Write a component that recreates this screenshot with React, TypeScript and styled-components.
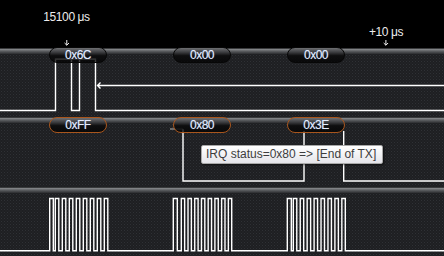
import styled, { createGlobalStyle } from "styled-components";

const GlobalStyle = createGlobalStyle`
  html, body {
    margin: 0;
    padding: 0;
    background: #000;
  }
  body {
    font-family: "Liberation Sans", Arial, sans-serif;
  }
`;

interface Frame {
  x: number;
  label: string;
}

const spiFrames: Frame[][] = [
  [
    { x: 49, label: "0x6C" },
    { x: 173, label: "0x00" },
    { x: 287, label: "0x00" },
  ],
  [
    { x: 49, label: "0xFF" },
    { x: 173, label: "0x80" },
    { x: 287, label: "0x3E" },
  ],
];

// first short pulse, then 8 clocks
const clockGroups = [
  { start: 49.7, firstEnd: 53.3, clk: 55.3, end: 107.8 },
  { start: 173.3, firstEnd: 177.3, clk: 181.3, end: 231.7 },
  { start: 287.3, firstEnd: 291.3, clk: 293.3, end: 345.3 },
];

function clockPath(high: number, low: number) {
  let d = `M0 ${low}`;
  clockGroups.forEach((g) => {
    d += ` H${g.start} V${high} H${g.firstEnd} V${low}`;
    const p = (g.end - g.clk) / 7.5;
    for (let i = 0; i < 8; i++) {
      const r = g.clk + i * p;
      d += ` H${r.toFixed(2)} V${high} H${(r + p / 2).toFixed(2)} V${low}`;
    }
  });
  return d + " H444";
}

export default function App() {
  return (
    <>
      <GlobalStyle />
      <Screen>
        <Ruler>
          <Marker $x={66.5} $gap={16}>
            <MarkerLabel>15100 μs</MarkerLabel>
            <DownArrow />
          </Marker>
          <Marker $x={386} $gap={1}>
            <MarkerLabel>+10 μs</MarkerLabel>
            <DownArrow />
          </Marker>
        </Ruler>

        <Channel $h={69}>
          <Rail />
          <Body>
            <Wave viewBox="0 0 444 63">
              <path d="M0 56.5 H55.5 V5 H71.5 V56.5 H79.5 V5 H95.5 V56.5 H444" />
              <path d="M55.5 5 H95.5" />
              <path d="M97.5 31.5 H444 M100.5 28.5 L97.5 31.5 L100.5 34.5" />
            </Wave>
          </Body>
          {spiFrames[0].map((f, i) => (
            <Bubble key={i} $x={f.x} $top={-1}>
              {f.label}
            </Bubble>
          ))}
        </Channel>

        <Channel $h={70}>
          <Rail />
          <Body>
            <Wave viewBox="0 0 444 64">
              <path d="M170 6 H183" stroke="#8a8a8a" />
              <path d="M183 6 V58 H304 V8 M343.7 8 V58 H444" />
            </Wave>
          </Body>
          {spiFrames[1].map((f, i) => (
            <Bubble key={i} $x={f.x} $top={0} $accent>
              {f.label}
            </Bubble>
          ))}
        </Channel>

        <Channel $h={69}>
          <Rail />
          <Body>
            <Wave viewBox="0 0 444 63">
              <path d={clockPath(5.5, 57.7)} />
            </Wave>
          </Body>
        </Channel>

        <Tooltip>IRQ status=0x80 =&gt; [End of TX]</Tooltip>
      </Screen>
    </>
  );
}

function DownArrow() {
  return (
    <ArrowSvg viewBox="0 0 6 6">
      <path d="M3 0 V5.2 M0.8 3 L3 5.2 L5.2 3" />
    </ArrowSvg>
  );
}

const Screen = styled.div`
  position: relative;
  width: 444px;
  height: 256px;
  display: flex;
  flex-direction: column;
  background: #000;
  overflow: hidden;
`;

const Ruler = styled.header`
  position: relative;
  height: 48px;
  flex-shrink: 0;
  background: #000;
  color: #ececec;
`;

const Marker = styled.div<{ $x: number; $gap: number }>`
  position: absolute;
  left: ${(p) => p.$x}px;
  bottom: 2px;
  transform: translateX(-50%);
  display: flex;
  flex-direction: column;
  align-items: center;
  gap: ${(p) => p.$gap}px;
`;

const MarkerLabel = styled.span`
  font-size: 12px;
  line-height: 14px;
  letter-spacing: -0.4px;
  white-space: nowrap;
`;

const ArrowSvg = styled.svg`
  width: 6px;
  height: 6px;
  display: block;
  fill: none;
  stroke: #f4f4f4;
  stroke-width: 1;
`;

const Channel = styled.section<{ $h: number }>`
  position: relative;
  height: ${(p) => p.$h}px;
  flex-shrink: 0;
  display: flex;
  flex-direction: column;
`;

const Rail = styled.div`
  height: 6px;
  flex-shrink: 0;
  background: linear-gradient(
    to bottom,
    #161718 0%,
    #808285 25%,
    #595b5e 55%,
    #2b2c2f 100%
  );
`;

const Body = styled.div`
  flex: 1;
  background-color: #1e1f22;
  background-image: radial-gradient(circle, #2f3135 0.7px, transparent 1px),
    radial-gradient(circle, #292b2f 0.7px, transparent 1px);
  background-size: 3px 3px, 3px 3px;
  background-position: 0 0, 1.5px 1.5px;
`;

const Wave = styled.svg`
  display: block;
  width: 100%;
  height: 100%;
  fill: none;
  stroke: #ffffff;
  stroke-width: 1.4;
`;

const Bubble = styled.div<{ $x: number; $top: number; $accent?: boolean }>`
  position: absolute;
  left: ${(p) => p.$x}px;
  top: ${(p) => p.$top}px;
  width: 58px;
  height: 16px;
  box-sizing: border-box;
  border-radius: 8px;
  border: 1px solid ${(p) => (p.$accent ? "#a9561d" : "#070707")};
  background: linear-gradient(
    to bottom,
    #6e6f72 0%,
    #3d3e41 30%,
    #0e0e0f 55%,
    rgba(0, 0, 0, 0.72) 100%
  );
  display: flex;
  align-items: center;
  justify-content: center;
  color: #e6eeff;
  font-size: 12px;
  line-height: 14px;
  letter-spacing: -0.5px;
  text-shadow: 0 0 1px rgba(140, 190, 255, 0.6);
`;

const Tooltip = styled.div`
  position: absolute;
  left: 201px;
  top: 145px;
  width: 182px;
  height: 19px;
  box-sizing: border-box;
  padding-left: 4px;
  border: 1px solid #a8a8a8;
  border-radius: 2px;
  background: linear-gradient(to bottom, #ffffff 0%, #e5e5ea 100%);
  box-shadow: 1px 1px 2px rgba(0, 0, 0, 0.5);
  color: #3d3d3d;
  font-size: 12px;
  line-height: 17px;
  white-space: nowrap;
`;
